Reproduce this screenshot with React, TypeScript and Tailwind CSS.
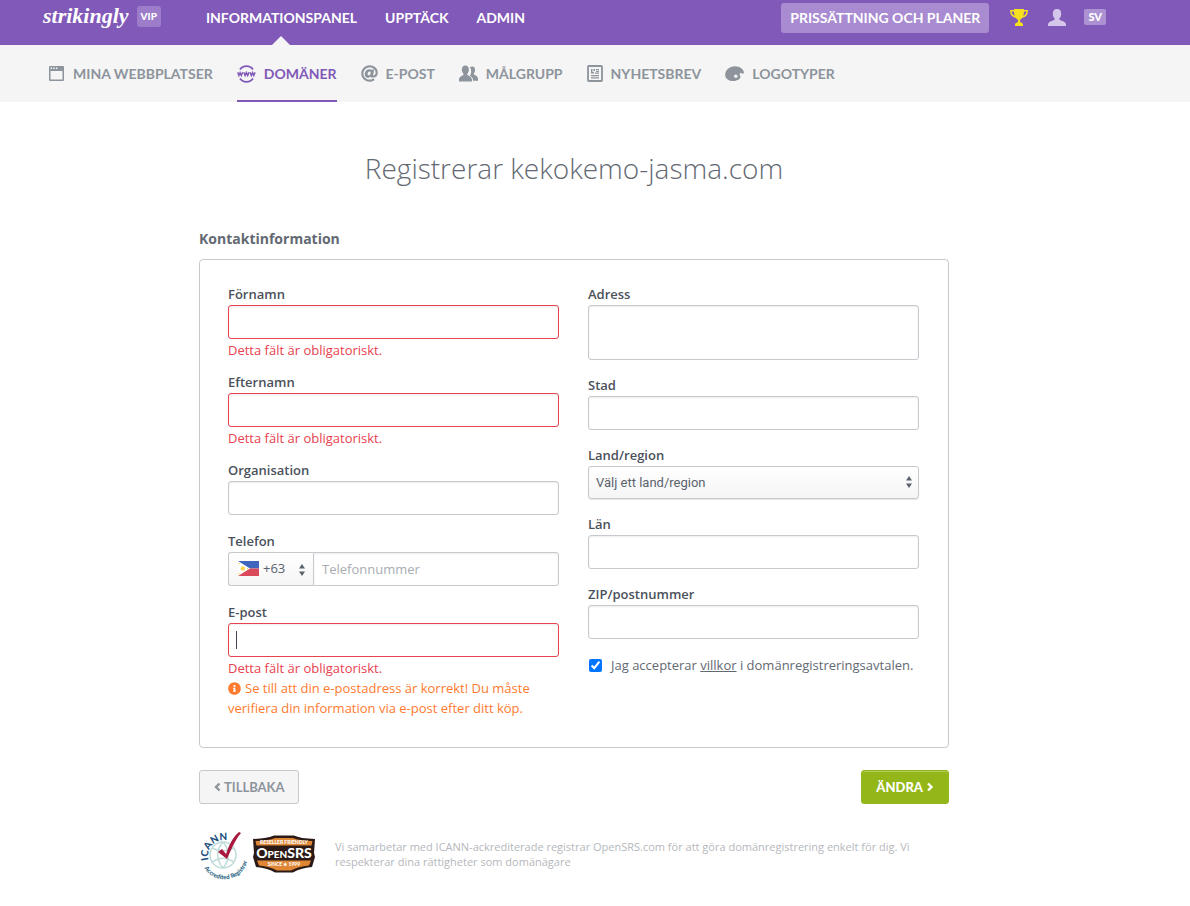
import type { ReactNode } from 'react';
import { FaAt, FaInfoCircle } from 'react-icons/fa';

const BUST = 'M9 0c2.900 0 4.200 2 4.200 4.800 0 1.800-.6 3.300-1.500 4.300-.5.600-.5 1.500.2 1.900 1.700.9 6.100 1.500 6.100 5V17H0v-1c0-3.500 4.400-4.100 6.100-5 .7-.4.7-1.300.2-1.900C5.400 8.100 4.800 6.600 4.800 4.800 4.800 2 6.100 0 9 0Z';

function UserIcon() {
  return (
    <svg width="18" height="17" viewBox="0 0 18 17" fill="currentColor" aria-hidden="true">
      <path d={BUST} />
    </svg>
  );
}

function TrophyIcon() {
  return (
    <svg width="18" height="17" viewBox="0 0 18 17" fill="none" aria-hidden="true">
      <path d="M4.500 1.800H.8c0 3.800 2.600 6 6.200 6.500M13.500 1.800h3.700c0 3.800-2.600 6-6.200 6.500" stroke="#f7e01e" strokeWidth="1.500" />
      <path d="M4 0h10v2.500c0 4.200-1.500 7.200-3.900 8.200v2.500c1.700.3 2.900 1.100 2.900 2.300V17H5v-1.500c0-1.200 1.200-2 2.900-2.300v-2.500C5.500 9.700 4 6.700 4 2.500Z" fill="#f7e01e" />
    </svg>
  );
}

function WindowIcon() {
  return (
    <svg width="16" height="16" viewBox="0 0 16 16" aria-hidden="true">
      <path fillRule="evenodd" fill="currentColor" d="M1 0h13a1 1 0 0 1 1 1v13a1 1 0 0 1-1 1H1a1 1 0 0 1-1-1V1a1 1 0 0 1 1-1ZM1.500 5v8.500h12V5ZM1.500 1.500V3H3V1.500Zm2.700 0V3h1.500V1.500Zm2.700 0V3h1.500V1.500Z" />
    </svg>
  );
}

function WwwIcon() {
  return (
    <svg width="19" height="18" viewBox="0 0 19 18" fill="none" stroke="currentColor" aria-hidden="true">
      <path d="M3 4.500C4.500 2.300 6.800 1.200 9.500 1.200s5 1.100 6.500 3.300M3 13.500c1.500 2.200 3.800 3.300 6.500 3.300s5-1.100 6.500-3.300" strokeWidth="1.800" />
      <path d="m.6 7.200 1.300 3.400 1.200-3 1.200 3 1.400-3.400m1.100 0 1.300 3.400 1.300-3 1.300 3 1.300-3.400m1 0 1.400 3.400 1.200-3 1.200 3 1.300-3.400" strokeWidth="1.400" />
    </svg>
  );
}

function AudienceIcon() {
  return (
    <svg width="19" height="17" viewBox="0 0 20 17" fill="currentColor" aria-hidden="true">
      <path d="M11.500 2.200C12 1.400 12.800 1 13.800 1c2.200 0 3.100 1.500 3.100 3.700 0 1.500-.4 2.600-1.100 3.400-.5.600-.3 1.400.3 1.700 1.300.7 3.900 1.500 3.900 4.400V16h-5.200c0-2.800-1.500-4.200-3.400-5.100.9-1.100 1.400-2.600 1.400-4.400 0-1.700-.4-3.200-1.300-4.300Z" />
      <path d="M6.700 0c2.500 0 3.700 1.700 3.700 4.400 0 1.800-.6 3.200-1.400 4.100-.5.600-.4 1.500.2 1.900 1.500.8 4.400 1.500 4.400 4.800V17H0v-1.800c0-3.300 2.800-4 4.300-4.800.6-.4.7-1.300.2-1.900C3.600 7.600 3 6.200 3 4.400 3 1.700 4.200 0 6.700 0Z" />
    </svg>
  );
}

function NewsIcon() {
  return (
    <svg width="16" height="17" viewBox="0 0 16 17" aria-hidden="true">
      <rect x="1" y="1" width="14" height="15" rx=".8" fill="none" stroke="currentColor" strokeWidth="1.800" />
      <path fill="currentColor" d="M4 4h1.500v3H7v1.500H4zM6.500 4H8v2H6.500zM9 4h3v1.300H9zM9 6h3v1H9zM8 7.500h4v1.200H8zM4 10h8v1.200H4zM4 12.300h8v1.200H4z" />
    </svg>
  );
}

function PaletteIcon() {
  return (
    <svg width="19" height="16" viewBox="0 0 19 16" aria-hidden="true">
      <path fillRule="evenodd" fill="currentColor" d="M9.800.3c5 0 9 2.900 9.100 6.300 0 1.300-1.200 1.500-2.200.7-1.300-.9-2.600.2-1.800 1.700.9 1.500.8 3.400-1.100 4.500-1.500.9-3.500 1.500-5.600 1.500C3.500 15 .2 12.300.2 8.900.2 4.200 4.600.3 9.800.3ZM10.800 8.600a1.800 1.600 0 1 0 0 3.200 1.800 1.600 0 0 0 0-3.200Z" />
    </svg>
  );
}

function FlagIcon() {
  return (
    <svg width="21" height="15" viewBox="0 0 21 15" aria-hidden="true">
      <path fill="#3f65bd" d="M0 0h21v7.500H0z" />
      <path fill="#da4a5b" d="M0 7.500h21V15H0z" />
      <path fill="#fff" d="M0 0l12 7.500L0 15z" />
      <circle cx="4.800" cy="7.500" r="2.300" fill="#f9d65c" />
      <path fill="#f9d65c" d="M.5 2h1.200v1.200H.5zM.5 12h1.200v1.200H.5zM9 7h1.200v1.200H9z" />
    </svg>
  );
}

function Arrows() {
  return (
    <svg width="6" height="12" viewBox="0 0 6 12" fill="#5a626d" aria-hidden="true">
      <path d="M3 0l3 4.500H0zM3 12l3-4.500H0z" />
    </svg>
  );
}

function Chevron({ d }: { d: string }) {
  return (
    <svg width="9" height="10" viewBox="0 0 9 10" fill="none" stroke="currentColor" strokeWidth="2.400" aria-hidden="true">
      <path d={d} />
    </svg>
  );
}

function IcannLogo() {
  return (
    <svg width="48" height="52" viewBox="0 0 48 52" role="img" aria-label="ICANN Accredited Registrar" className="shrink-0 overflow-visible">
      <defs>
        <path id="icann-top" d="M9.500 32A15.500 15.500 0 0 1 40 24" />
        <path id="icann-bottom" d="M5.500 40A22 22 0 0 0 45.500 16" />
      </defs>
      <g fill="none" stroke="#bfdcd8" strokeWidth="1.500">
        <circle cx="24" cy="27" r="13" />
        <path d="M13 20c8 4 14 4 22 0M13 34c8-5 14-5 22 0M24 14c-7 8-7 18 0 26M24 14c7 8 7 18 0 26" />
      </g>
      <path fill="#a8193d" d="M19 24l4-3 4 5C30 17 34 9 40 4l2 1C36 12 32 22 28 31z" />
      <text fill="#1c4f7c" fontFamily="Lato, sans-serif" fontSize="10" fontWeight="900">
        <textPath href="#icann-top">ICANN</textPath>
      </text>
      <text fill="#2c6584" fontFamily="Lato, sans-serif" fontSize="6" fontWeight="900">
        <textPath href="#icann-bottom">Accredited Registrar</textPath>
      </text>
    </svg>
  );
}

function OpenSrsLogo() {
  return (
    <svg width="62" height="38" viewBox="0 0 62 38" role="img" aria-label="OpenSRS" className="shrink-0">
      <path fill="#2b1a16" d="M0 4q15-.5 21-3.500h20q6 3 21 3.500l-1 14 1 4-3 10q-12 1-19 5.500H22q-7-4.500-19-5.500L0 22l1-4z" />
      <path fill="#e08736" d="M2.500 6q14-.5 19.500-3h18q5.500 2.500 19.500 3l-1 4.500h-55zM4 25.500h54l-2 5q-11 1-18 5H24q-7-4-18-5z" />
      <g fill="#fff" textAnchor="middle" fontFamily="Lato, sans-serif" fontWeight="900">
        <text x="31" y="9" fontSize="5">RESELLER FRIENDLY</text>
        <text x="31" y="23" fontSize="14">O<tspan fontSize="10">PEN</tspan>SRS</text>
        <text x="31" y="31" fontSize="5">SINCE ★ 1999</text>
      </g>
    </svg>
  );
}

const box =
  'block w-full rounded-[3px] border bg-white px-2 text-[13px] text-[#5a626d] placeholder:text-[#a9adb3] shadow-[inset_0_1px_2px_rgba(0,0,0,0.08)] outline-none';

function Field({ id, label, children, error }: { id: string; label: string; children: ReactNode; error?: boolean }) {
  return (
    <div>
      <label htmlFor={id} className="block pb-px text-[13px] leading-[19px] font-semibold text-[#4b515b]">{label}</label>
      {children}
      {error && <p className="pt-[2px] text-[13px] leading-[19px] text-[#e8424f]">Detta fält är obligatoriskt.</p>}
    </div>
  );
}

function TextField({ id, label, error }: { id: string; label: string; error?: boolean }) {
  return (
    <Field id={id} label={label} error={error}>
      <input id={id} type="text" className={`${box} h-[34px] ${error ? 'border-[#e8424f]' : 'border-[#c6c9cd]'}`} />
    </Field>
  );
}

const tabs = [
  { label: 'MINA WEBBPLATSER', icon: <WindowIcon /> },
  { label: 'DOMÄNER', icon: <WwwIcon />, active: true },
  { label: 'E-POST', icon: <FaAt size={17} /> },
  { label: 'MÅLGRUPP', icon: <AudienceIcon /> },
  { label: 'NYHETSBREV', icon: <NewsIcon /> },
  { label: 'LOGOTYPER', icon: <PaletteIcon /> },
];

export default function App() {
  return (
    <div className="bg-white font-['Open_Sans',sans-serif] text-[#636972]">
      <header className="flex h-[45px] items-start bg-[#8159b8] pr-[84px] pl-[43px] font-['Lato',sans-serif] text-[14px] font-bold text-white">
        <div className="flex h-8 items-center gap-2">
          <a href="#" className="font-['Liberation_Serif',serif] text-[22px] leading-8 font-bold italic">strikingly</a>
          <span className="rounded-[3px] bg-[#9d7dc9] px-1 text-[10px] leading-[21px] font-black">VIP</span>
        </div>
        <nav className="ml-[45px] flex gap-[28px] leading-9">
          <a href="#" className="relative h-[45px]">
            INFORMATIONSPANEL
            <svg className="absolute bottom-0 left-1/2 -translate-x-1/2" width="18" height="9" viewBox="0 0 18 9" aria-hidden="true">
              <path d="M0 9l9-9 9 9z" fill="#f5f5f5" />
            </svg>
          </a>
          <a href="#">UPPTÄCK</a>
          <a href="#">ADMIN</a>
        </nav>
        <div className="ml-auto flex items-start">
          <a href="#" className="mt-[3px] rounded-[3px] bg-[#a88bd0] px-[9px] leading-[30px]">PRISSÄTTNING OCH PLANER</a>
          <div className="ml-[21px] flex h-[34px] items-center">
            <button type="button" aria-label="Belöningar"><TrophyIcon /></button>
            <button type="button" aria-label="Konto" className="ml-5 text-[#d5c7e9]"><UserIcon /></button>
            <button type="button" className="ml-[18px] rounded-[2px] bg-[#ad92d3] px-1 text-[11px] leading-4 font-black">SV</button>
          </div>
        </div>
      </header>

      <nav className="flex h-[57px] gap-[24px] bg-[#f5f5f5] pl-[49px] font-['Lato',sans-serif] text-[14px] font-bold">
        {tabs.map((t) => (
          <a
            key={t.label}
            href="#"
            className={`flex items-center gap-2 border-b-2 pt-[2px] ${t.active ? 'border-[#8159b8] text-[#8159b8]' : 'border-transparent text-[#8d949c]'}`}
          >
            {t.icon}
            {t.label}
          </a>
        ))}
      </nav>

      <main className="pr-[42px]">
        <div className="mx-auto max-w-[750px] pt-[46px]">
          <h1 className="text-center text-[28px] leading-10 font-light">Registrerar kekokemo-jasma.com</h1>
          <h2 className="mt-[41px] text-[14px] leading-5 font-bold">Kontaktinformation</h2>

          <form className="mt-[10px]">
            <div className="grid grid-cols-2 gap-[29px] rounded-[4px] border border-[#c6c9cd] pt-[25px] pr-[29px] pb-[29px] pl-7">
              <div className="flex flex-col gap-[13px]">
                <TextField id="first" label="Förnamn" error />
                <TextField id="last" label="Efternamn" error />
                <div className="pb-1"><TextField id="org" label="Organisation" /></div>
                <div className="pb-1">
                  <Field id="phone" label="Telefon">
                    <div className="flex">
                      <div className="relative w-[85px] shrink-0">
                        <select aria-label="Landskod" className="h-[34px] w-full appearance-none rounded-l-[3px] border border-r-0 border-[#c6c9cd] bg-linear-to-b from-white to-[#f5f5f5] pl-[34px] text-[13px] text-[#5a626d]">
                          <option>+63</option>
                        </select>
                        <span className="pointer-events-none absolute top-[9px] left-[10px]"><FlagIcon /></span>
                        <span className="pointer-events-none absolute top-3 right-2"><Arrows /></span>
                      </div>
                      <input id="phone" type="tel" placeholder="Telefonnummer" className={`${box} h-[34px] min-w-0 flex-1 rounded-l-none border-[#c6c9cd]`} />
                    </div>
                  </Field>
                </div>
                <div>
                  <div className="relative">
                    <TextField id="email" label="E-post" error />
                    <span className="pointer-events-none absolute top-7 left-2 h-[18px] w-px bg-[#3f4650]" />
                  </div>
                  <p className="text-[13px] leading-5 text-[#ff7a2f]">
                    <FaInfoCircle size={13} className="mr-1 inline-block align-[-2px]" />
                    Se till att din e-postadress är korrekt! Du måste verifiera din information via e-post efter ditt köp.
                  </p>
                </div>
              </div>

              <div className="flex flex-col gap-4">
                <Field id="address" label="Adress">
                  <textarea id="address" className={`${box} h-[55px] resize-none border-[#c6c9cd]`} />
                </Field>
                <TextField id="city" label="Stad" />
                <Field id="country" label="Land/region">
                  <div className="relative">
                    <select id="country" className="block h-[33px] w-full appearance-none rounded-[3px] border border-[#c6c9cd] bg-linear-to-b from-white to-[#f5f5f5] px-[7px] font-['Roboto',sans-serif] text-[13px] text-[#5a626d] shadow-[0_1px_1px_rgba(0,0,0,0.1)]">
                      <option>Välj ett land/region</option>
                    </select>
                    <span className="pointer-events-none absolute top-[10px] right-[7px]"><Arrows /></span>
                  </div>
                </Field>
                <TextField id="county" label="Län" />
                <TextField id="zip" label="ZIP/postnummer" />
                <div className="flex items-center gap-[9px] text-[13px] leading-5">
                  <input id="terms" type="checkbox" defaultChecked className="ml-px size-[13px] accent-[#0075ff]" />
                  <label htmlFor="terms">Jag accepterar <a href="#" className="underline">villkor</a> i domänregistreringsavtalen.</label>
                </div>
              </div>
            </div>

            <div className="mt-[22px] flex justify-between font-['Lato',sans-serif] text-[13px] leading-8 font-bold">
              <button type="button" className="flex items-center gap-[2px] rounded-[3px] border border-[#c6c9cd] bg-[#f5f5f5] px-[13px] text-[#8d949c]">
                <Chevron d="M6.500 1.500L3 5l3.500 3.500" />TILLBAKA
              </button>
              <button type="submit" className="flex items-center gap-[2px] rounded-[3px] border border-[#93b719] bg-[#93b719] px-[14px] font-black text-white shadow-[inset_0_1px_0_rgba(255,255,255,0.3)]">
                ÄNDRA<Chevron d="M3 1.500L6.500 5L3 8.500" />
              </button>
            </div>
          </form>

          <footer className="mt-[24px] flex items-center gap-[6px]">
            <IcannLogo />
            <OpenSrsLogo />
            <p className="ml-[14px] max-w-[600px] text-[11px] leading-[15px] text-[#b5b8bc]">
              Vi samarbetar med ICANN-ackrediterade registrar OpenSRS.com för att göra domänregistrering enkelt för dig. Vi respekterar dina rättigheter som domänägare
            </p>
          </footer>
        </div>
      </main>
    </div>
  );
}
